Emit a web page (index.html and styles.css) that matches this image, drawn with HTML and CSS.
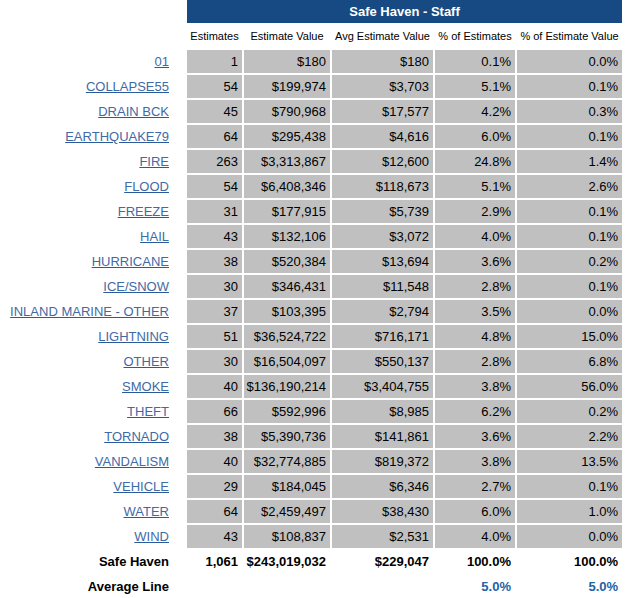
FILE: index.html
```html
<!DOCTYPE html>
<html>
<head>
<meta charset="utf-8">
<link rel="stylesheet" href="styles.css">
</head>
<body>
<table class="grid">
  <colgroup>
    <col class="c-label"><col class="c-est"><col class="c-val"><col class="c-avg"><col class="c-pe"><col class="c-pv">
  </colgroup>
  <tr class="title-row"><td class="blank"></td><th class="title" colspan="5">Safe Haven - Staff</th></tr>
  <tr class="head-row"><td class="blank"></td><th>Estimates</th><th>Estimate Value</th><th>Avg Estimate Value</th><th>% of Estimates</th><th>% of Estimate Value</th></tr>
  <tr><td class="label"><a href="#">01</a></td><td class="num">1</td><td class="num">$180</td><td class="num">$180</td><td class="num">0.1%</td><td class="num">0.0%</td></tr>
  <tr><td class="label"><a href="#">COLLAPSE55</a></td><td class="num">54</td><td class="num">$199,974</td><td class="num">$3,703</td><td class="num">5.1%</td><td class="num">0.1%</td></tr>
  <tr><td class="label"><a href="#">DRAIN BCK</a></td><td class="num">45</td><td class="num">$790,968</td><td class="num">$17,577</td><td class="num">4.2%</td><td class="num">0.3%</td></tr>
  <tr><td class="label"><a href="#">EARTHQUAKE79</a></td><td class="num">64</td><td class="num">$295,438</td><td class="num">$4,616</td><td class="num">6.0%</td><td class="num">0.1%</td></tr>
  <tr><td class="label"><a href="#">FIRE</a></td><td class="num">263</td><td class="num">$3,313,867</td><td class="num">$12,600</td><td class="num">24.8%</td><td class="num">1.4%</td></tr>
  <tr><td class="label"><a href="#">FLOOD</a></td><td class="num">54</td><td class="num">$6,408,346</td><td class="num">$118,673</td><td class="num">5.1%</td><td class="num">2.6%</td></tr>
  <tr><td class="label"><a href="#">FREEZE</a></td><td class="num">31</td><td class="num">$177,915</td><td class="num">$5,739</td><td class="num">2.9%</td><td class="num">0.1%</td></tr>
  <tr><td class="label"><a href="#">HAIL</a></td><td class="num">43</td><td class="num">$132,106</td><td class="num">$3,072</td><td class="num">4.0%</td><td class="num">0.1%</td></tr>
  <tr><td class="label"><a href="#">HURRICANE</a></td><td class="num">38</td><td class="num">$520,384</td><td class="num">$13,694</td><td class="num">3.6%</td><td class="num">0.2%</td></tr>
  <tr><td class="label"><a href="#">ICE/SNOW</a></td><td class="num">30</td><td class="num">$346,431</td><td class="num">$11,548</td><td class="num">2.8%</td><td class="num">0.1%</td></tr>
  <tr><td class="label"><a href="#">INLAND MARINE - OTHER</a></td><td class="num">37</td><td class="num">$103,395</td><td class="num">$2,794</td><td class="num">3.5%</td><td class="num">0.0%</td></tr>
  <tr><td class="label"><a href="#">LIGHTNING</a></td><td class="num">51</td><td class="num">$36,524,722</td><td class="num">$716,171</td><td class="num">4.8%</td><td class="num">15.0%</td></tr>
  <tr><td class="label"><a href="#">OTHER</a></td><td class="num">30</td><td class="num">$16,504,097</td><td class="num">$550,137</td><td class="num">2.8%</td><td class="num">6.8%</td></tr>
  <tr><td class="label"><a href="#">SMOKE</a></td><td class="num">40</td><td class="num">$136,190,214</td><td class="num">$3,404,755</td><td class="num">3.8%</td><td class="num">56.0%</td></tr>
  <tr><td class="label"><a href="#">THEFT</a></td><td class="num">66</td><td class="num">$592,996</td><td class="num">$8,985</td><td class="num">6.2%</td><td class="num">0.2%</td></tr>
  <tr><td class="label"><a href="#">TORNADO</a></td><td class="num">38</td><td class="num">$5,390,736</td><td class="num">$141,861</td><td class="num">3.6%</td><td class="num">2.2%</td></tr>
  <tr><td class="label"><a href="#">VANDALISM</a></td><td class="num">40</td><td class="num">$32,774,885</td><td class="num">$819,372</td><td class="num">3.8%</td><td class="num">13.5%</td></tr>
  <tr><td class="label"><a href="#">VEHICLE</a></td><td class="num">29</td><td class="num">$184,045</td><td class="num">$6,346</td><td class="num">2.7%</td><td class="num">0.1%</td></tr>
  <tr><td class="label"><a href="#">WATER</a></td><td class="num">64</td><td class="num">$2,459,497</td><td class="num">$38,430</td><td class="num">6.0%</td><td class="num">1.0%</td></tr>
  <tr><td class="label"><a href="#">WIND</a></td><td class="num">43</td><td class="num">$108,837</td><td class="num">$2,531</td><td class="num">4.0%</td><td class="num">0.0%</td></tr>
  <tr class="total-row"><td class="label">Safe Haven</td><td class="num">1,061</td><td class="num">$243,019,032</td><td class="num">$229,047</td><td class="num">100.0%</td><td class="num">100.0%</td></tr>
  <tr class="avg-row"><td class="label">Average Line</td><td class="num"></td><td class="num"></td><td class="num"></td><td class="num">5.0%</td><td class="num">5.0%</td></tr>
</table>
</body>
</html>
```
FILE: styles.css
```css
html, body {
  margin: 0;
  padding: 0;
  background: #ffffff;
}

body {
  font-family: "Liberation Sans", Arial, sans-serif;
  font-size: 13px;
  color: #000000;
}

.grid {
  border-collapse: separate;
  border-spacing: 2px;
  table-layout: fixed;
  width: 624px;
  margin-top: -2px;
}

.c-label { width: 183px; }
.c-est { width: 55px; }
.c-val { width: 86px; }
.c-avg { width: 101px; }
.c-pe { width: 80px; }
.c-pv { width: 105px; }

.grid td, .grid th {
  box-sizing: border-box;
  height: 23px;
  padding: 0;
  line-height: 15px;
  vertical-align: middle;
  white-space: nowrap;
}

.title {
  background: #174a82;
  color: #ffffff;
  font-weight: bold;
  font-size: 13px;
  text-align: center;
}

.head-row th {
  font-weight: normal;
  font-size: 11px;
  text-align: center;
}

.label {
  text-align: right;
  padding-right: 16px !important;
}

.label a {
  color: #3f6aa6;
  text-decoration: underline;
  text-decoration-color: #2a5a9c;
}

.num {
  background: #c0c0c0;
  text-align: right;
  padding-right: 4px !important;
}

.total-row td {
  font-weight: bold;
  background: transparent;
}

.avg-row td {
  font-weight: bold;
  background: transparent;
  color: #2262a6;
}

.avg-row .label {
  color: #000000;
}
```
